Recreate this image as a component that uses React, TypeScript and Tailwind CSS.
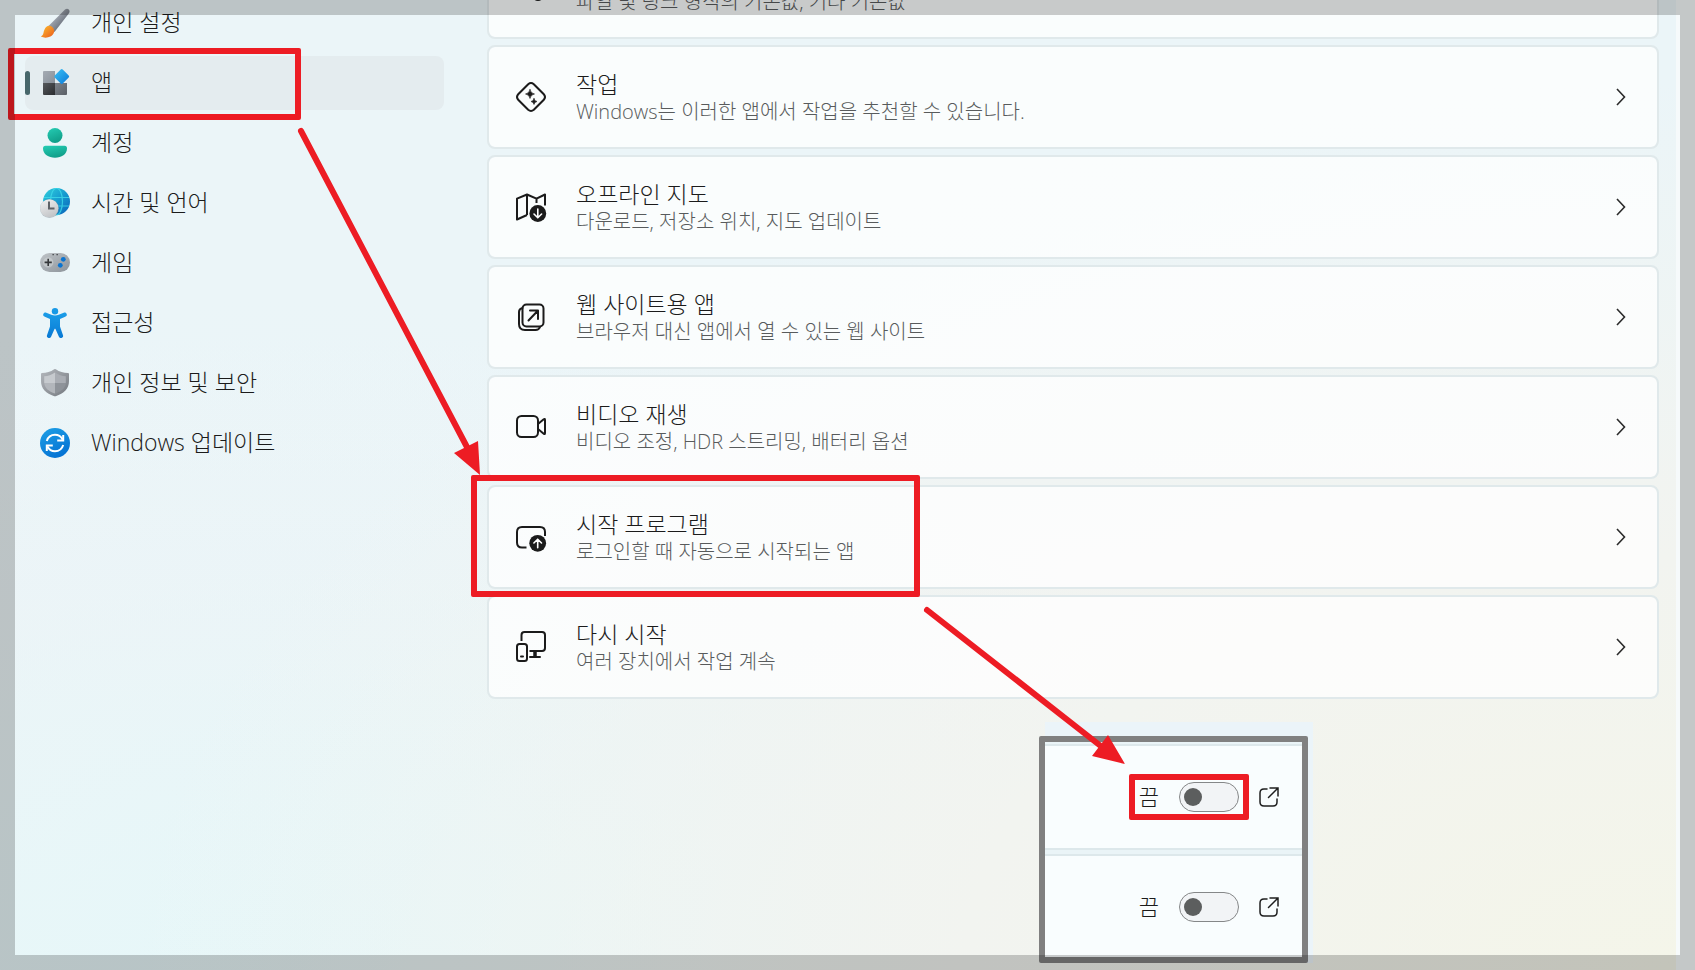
import type { ReactNode } from 'react';

interface NavEntry {
  label: string;
  icon: ReactNode;
  active?: boolean;
}

interface SettingEntry {
  title: string;
  description: string;
  icon: ReactNode;
}

function ColorIcon({ children }: { children: ReactNode }) {
  return (
    <svg viewBox="0 0 30 30" className="size-[30px] shrink-0" aria-hidden="true">
      {children}
    </svg>
  );
}

function LineIcon({ children }: { children: ReactNode }) {
  return (
    <svg
      viewBox="0 0 30 30"
      className="size-[30px] shrink-0 overflow-visible text-[#1b1b1b]"
      fill="none"
      stroke="currentColor"
      strokeWidth="2"
      strokeLinecap="round"
      strokeLinejoin="round"
      aria-hidden="true"
    >
      {children}
    </svg>
  );
}

/* Sidebar icons */

const BrushIcon = (
  <ColorIcon>
    <defs>
      <linearGradient id="brush-handle" x1="0" y1="0" x2="1" y2="1">
        <stop offset="0.2" stopColor="#b4bac3" />
        <stop offset="0.8" stopColor="#5c636e" />
      </linearGradient>
      <linearGradient id="brush-tip" x1="0" y1="0" x2="1" y2="1">
        <stop offset="0" stopColor="#fdc02f" />
        <stop offset="1" stopColor="#ea5a1c" />
      </linearGradient>
    </defs>
    <path d="M8.500 18 25 1.500c2-1.700 5.300-.4 4.400 2.700-.2.600-.5 1-.8 1.500L14.500 24z" fill="url(#brush-handle)" />
    <path d="M.8 28.500c1.800-.8 2.300-1.900 2.700-3.700.7-3.600 2.300-6.700 5.300-7.100 2.700 0 5 2 5.400 4.500.2 2.700-1.200 4.900-3.800 6.300-3 1.600-6.800 1.500-9.600 0z" fill="url(#brush-tip)" />
  </ColorIcon>
);

const AppsIcon = (
  <ColorIcon>
    <defs>
      <linearGradient id="apps-a" x1="0" y1="0" x2="1" y2="1">
        <stop offset="0" stopColor="#a4abb3" />
        <stop offset="1" stopColor="#89919a" />
      </linearGradient>
      <linearGradient id="apps-b" x1="0" y1="0" x2="1" y2="1">
        <stop offset="0" stopColor="#55585b" />
        <stop offset="1" stopColor="#2b2d30" />
      </linearGradient>
      <linearGradient id="apps-c" x1="0" y1="0" x2="1" y2="1">
        <stop offset="0" stopColor="#7c828a" />
        <stop offset="1" stopColor="#5a5f66" />
      </linearGradient>
      <linearGradient id="apps-d" x1="0" y1="0" x2="1" y2="1">
        <stop offset="0" stopColor="#3cc3f5" />
        <stop offset="1" stopColor="#0a78d8" />
      </linearGradient>
    </defs>
    <path d="M4 3h11v12H3V4q0-1 1-1z" fill="url(#apps-a)" />
    <path d="M3 15h12v12H4q-1 0-1-1z" fill="url(#apps-b)" />
    <path d="M15 15h12v11q0 1-1 1H15z" fill="url(#apps-c)" />
    <path d="M20.7 1.400q1-1 2 0l6 6q1 1 0 2l-6 6q-1 1-2 0l-6-6q-1-1 0-2z" fill="url(#apps-d)" />
  </ColorIcon>
);

const AccountIcon = (
  <ColorIcon>
    <defs>
      <linearGradient id="account" x1="0" y1="0" x2="0.4" y2="1">
        <stop offset="0" stopColor="#25cdb4" />
        <stop offset="1" stopColor="#119f8a" />
      </linearGradient>
    </defs>
    <circle cx="15" cy="7.5" r="7.5" fill="url(#account)" />
    <path d="M5.5 17.800h19q2.500 0 2.500 2.500c0 6-5.500 9.500-12 9.500S3 26.300 3 20.300q0-2.500 2.500-2.500z" fill="url(#account)" />
  </ColorIcon>
);

const TimeIcon = (
  <ColorIcon>
    <defs>
      <linearGradient id="globe" x1="0" y1="0" x2="1" y2="1">
        <stop offset="0" stopColor="#32d0dc" />
        <stop offset="0.5" stopColor="#169cd0" />
        <stop offset="1" stopColor="#0a5fb8" />
      </linearGradient>
      <linearGradient id="clock" x1="0" y1="0" x2="0.5" y2="1">
        <stop offset="0" stopColor="#f3f3f3" />
        <stop offset="1" stopColor="#c3c5c8" />
      </linearGradient>
    </defs>
    <circle cx="16.5" cy="13.5" r="13.5" fill="url(#globe)" />
    <g fill="none" stroke="#3fdaea" strokeWidth="1.2" opacity="0.8">
      <ellipse cx="16.5" cy="13.5" rx="6" ry="13.3" />
      <path d="M4 9.500h25M3.500 18h25.500" />
    </g>
    <circle cx="9.5" cy="20.500" r="9.5" fill="#80909c" opacity="0.5" />
    <circle cx="9.3" cy="20.300" r="9.1" fill="url(#clock)" />
    <path d="M9 13.500v7h5.500" fill="none" stroke="#5d6166" strokeWidth="2" />
  </ColorIcon>
);

const GameIcon = (
  <ColorIcon>
    <defs>
      <linearGradient id="pad" x1="0" y1="0" x2="1" y2="1">
        <stop offset="0" stopColor="#bfc4c8" />
        <stop offset="1" stopColor="#8c939a" />
      </linearGradient>
    </defs>
    <rect x="0" y="5" width="30" height="19" rx="9.5" fill="url(#pad)" />
    <circle cx="8.2" cy="14.4" r="5.2" fill="#cfd3d6" opacity="0.6" />
    <path d="M8.200 10.800v7.200M4.600 14.400h7.200" stroke="#35383b" strokeWidth="1.6" />
    <path d="M12.500 6.600h1.300M16.500 6.600h1.300" stroke="#3b3e41" strokeWidth="1.4" />
    <circle cx="23.3" cy="11.300" r="2.4" fill="#0a74d0" />
    <circle cx="20.3" cy="17.300" r="2.4" fill="#0a74d0" />
  </ColorIcon>
);

const AccessibilityIcon = (
  <ColorIcon>
    <defs>
      <linearGradient id="person" x1="0" y1="0" x2="0" y2="1">
        <stop offset="0" stopColor="#1b9de8" />
        <stop offset="1" stopColor="#0879d4" />
      </linearGradient>
    </defs>
    <circle cx="15" cy="3.2" r="3.2" fill="#1899e6" />
    <path
      d="M3.300 6.100c.5-1.500 1.700-1.900 3-1.400l5 2.100c2.400.9 5 .9 7.400 0l5-2.100c1.300-.5 2.600-.1 3 1.400.4 1.300-.2 2.200-1.500 2.700L20 10.900v7.600l3 8.800c.4 1.300-.2 2.300-1.400 2.600-1.300.4-2.300-.1-2.800-1.300L15.500 21c-.2-.4-.8-.4-1 0l-3.300 7.600c-.5 1.200-1.500 1.700-2.800 1.300-1.200-.3-1.800-1.300-1.400-2.600l3-8.800v-7.600L4.800 8.800C3.500 8.300 2.900 7.400 3.300 6.100z"
      fill="url(#person)"
    />
  </ColorIcon>
);

const ShieldIcon = (
  <ColorIcon>
    <defs>
      <linearGradient id="shield" x1="0" y1="0" x2="1" y2="1">
        <stop offset="0" stopColor="#b4b8bd" />
        <stop offset="1" stopColor="#74797f" />
      </linearGradient>
    </defs>
    <path d="M14.200 1.300q.8-.5 1.600 0C19.500 4 23.500 5 28 5q1 0 1 1v7c0 7.500-5 12.500-13.300 15.200q-.7.200-1.400 0C6 25.500 1 20.500 1 13V6q0-1 1-1c4.500 0 8.500-1 12.200-3.700z" fill="url(#shield)" />
    <path d="M15 4.500C11.500 7 8 8 4.200 8.200V15H15z" fill="#c6cace" />
    <path d="M15 4.500C18.500 7 22 8 25.800 8.200V15H15z" fill="#a9adb3" />
    <path d="M4.200 15H15v10.500C8.500 23.500 4.700 20 4.200 15z" fill="#b2b6bb" />
    <path d="M25.800 15H15v10.500c6.500-2 10.300-5.500 10.800-10.500z" fill="#8e9399" />
  </ColorIcon>
);

const UpdateIcon = (
  <ColorIcon>
    <defs>
      <linearGradient id="update" x1="0" y1="0" x2="0.5" y2="1">
        <stop offset="0" stopColor="#1ea0e6" />
        <stop offset="1" stopColor="#0674d4" />
      </linearGradient>
    </defs>
    <circle cx="15" cy="15" r="15" fill="url(#update)" />
    <g fill="none" stroke="#fff" strokeWidth="2">
      <path d="M6.800 13c1.200-3.800 4.500-6.200 8.200-6.200 3.200 0 6 1.700 7.600 4.700" />
      <path d="M23.200 7v5.500h-6" />
      <path d="M23.200 17c-1.200 3.800-4.500 6.200-8.200 6.200-3.200 0-6-1.700-7.600-4.700" />
      <path d="M6.800 23v-5.500h6" />
    </g>
  </ColorIcon>
);

/* Settings card icons */

const DefaultAppsIcon = (
  <LineIcon>
    <path d="M6 1h18q5 0 5 5v5M1 11V6q0-5 5-5M1 11v6" />
    <circle cx="22" cy="23" r="5" fill="currentColor" />
  </LineIcon>
);

const ActionsIcon = (
  <LineIcon>
    <path d="M12.200 2.200q2.800-2.400 5.600 0l10 10q2.400 2.800 0 5.600l-10 10q-2.800 2.400-5.600 0l-10-10q-2.400-2.800 0-5.600z" />
    <path d="M14 7.500q.6 3.900 4.500 4.500-3.900.6-4.500 4.500-.6-3.900-4.500-4.500 3.900-.6 4.500-4.500z" fill="currentColor" strokeWidth="0.6" />
    <path d="M18 16.500q.4 2.600 3 3-2.600.4-3 3-.4-2.600-3-3 2.600-.4 3-3z" fill="currentColor" strokeWidth="0.6" />
  </LineIcon>
);

const MapIcon = (
  <LineIcon>
    <path d="M11 23 1 27.500V6.700L11 2.500l9.500 4.200L29 2.500v11M11 3v20M20.500 7v4" strokeLinecap="butt" />
    <circle cx="21.8" cy="21.500" r="8.4" fill="currentColor" stroke="none" />
    <path d="M21.800 17v8.500M18 22l3.800 3.800 3.800-3.800" stroke="#fff" strokeWidth="1.6" />
  </LineIcon>
);

const WebAppsIcon = (
  <LineIcon>
    <rect x="6.5" y="2.5" width="21" height="22" rx="4" />
    <path d="M6.500 6C4 6.500 3 8 3 10v12q0 6 6 6h10.500q3.500 0 4.500-3" />
    <path d="M12.500 18.500 22 8.500M14 8.500h8V17" />
  </LineIcon>
);

const VideoIcon = (
  <LineIcon>
    <rect x="1" y="4" width="21" height="21" rx="4.500" />
    <path d="m22 12 5.700-4.700q1.300-1 1.300.7v13q0 1.700-1.300.7L22 17" />
  </LineIcon>
);

const StartupIcon = (
  <LineIcon>
    <path d="M10.500 25.500H6q-5 0-5-5V10q0-5 5-5h18q5 0 5 5v4" strokeLinecap="butt" />
    <circle cx="21.7" cy="21.300" r="8.4" fill="currentColor" stroke="none" />
    <path d="M21.700 25.800v-8.500M17.900 21l3.800-3.800 3.800 3.800" stroke="#fff" strokeWidth="1.6" />
  </LineIcon>
);

const ResumeIcon = (
  <LineIcon>
    <path d="M5.500 9V3q0-3 3-3H26q3 0 3 3v13q0 3-3 3H13.500" strokeLinecap="butt" />
    <rect x="1" y="12" width="10" height="17" rx="2.500" />
    <path d="M5 24.500h2M14 25h10" />
    <path d="M19 19.500V25" strokeWidth="3.500" strokeLinecap="butt" />
  </LineIcon>
);

function ChevronIcon() {
  return (
    <svg viewBox="0 0 10 18" className="h-[18px] w-2.5 shrink-0" fill="none" stroke="#2a2a2a" strokeWidth="1.6" aria-hidden="true">
      <path d="m1 1 7.500 8L1 17" />
    </svg>
  );
}

function OpenIcon() {
  return (
    <svg viewBox="0 0 20 20" className="size-5" fill="none" stroke="#1f1f1f" strokeWidth="1.5" strokeLinecap="round" aria-hidden="true">
      <path d="M8 2H5Q1 2 1 6v9q0 4 4 4h9q4 0 4-4v-3" />
      <path d="M11 1h8v8M19 1l-9.500 9.500" />
    </svg>
  );
}

const navEntries: NavEntry[] = [
  { label: '개인 설정', icon: BrushIcon },
  { label: '앱', icon: AppsIcon, active: true },
  { label: '계정', icon: AccountIcon },
  { label: '시간 및 언어', icon: TimeIcon },
  { label: '게임', icon: GameIcon },
  { label: '접근성', icon: AccessibilityIcon },
  { label: '개인 정보 및 보안', icon: ShieldIcon },
  { label: 'Windows 업데이트', icon: UpdateIcon },
];

const settingEntries: SettingEntry[] = [
  { title: '기본 앱', description: '파일 및 링크 형식의 기본값, 기타 기본값', icon: DefaultAppsIcon },
  { title: '작업', description: 'Windows는 이러한 앱에서 작업을 추천할 수 있습니다.', icon: ActionsIcon },
  { title: '오프라인 지도', description: '다운로드, 저장소 위치, 지도 업데이트', icon: MapIcon },
  { title: '웹 사이트용 앱', description: '브라우저 대신 앱에서 열 수 있는 웹 사이트', icon: WebAppsIcon },
  { title: '비디오 재생', description: '비디오 조정, HDR 스트리밍, 배터리 옵션', icon: VideoIcon },
  { title: '시작 프로그램', description: '로그인할 때 자동으로 시작되는 앱', icon: StartupIcon },
  { title: '다시 시작', description: '여러 장치에서 작업 계속', icon: ResumeIcon },
];

function NavItem({ label, icon, active }: NavEntry) {
  return (
    <a
      href="#"
      aria-current={active ? 'page' : undefined}
      className={
        active
          ? 'relative flex h-[54px] items-center gap-[21px] rounded-lg bg-[#e4ecef] pl-[15px]'
          : 'relative flex h-[54px] items-center gap-[21px] rounded-lg pl-[15px]'
      }
    >
      {active && <span className="absolute left-0 h-6 w-[5px] rounded-full bg-[#47676b]" />}
      {icon}
      <span className="pb-0.5 text-[23px] leading-7">{label}</span>
    </a>
  );
}

function SettingCard({ title, description, icon }: SettingEntry) {
  return (
    <a
      href="#"
      className="flex h-[104px] items-center gap-[30px] rounded-lg border-2 border-[#e0e9eb] bg-white/75 bg-clip-padding pr-[31px] pl-[27px]"
    >
      {icon}
      <span className="flex flex-1 flex-col gap-0.5">
        <span className="text-[23px] leading-7">{title}</span>
        <span className="text-[20px] leading-6 text-[#585b5c]">{description}</span>
      </span>
      <ChevronIcon />
    </a>
  );
}

function ToggleRow({ id, className }: { id: string; className: string }) {
  return (
    <div className={`flex items-center justify-end gap-5 border-[#dde8eb] bg-[#f9fdfe] pr-[23px] ${className}`}>
      <label htmlFor={id} className="pb-0.5 text-[22px] leading-7">
        끔
      </label>
      <input
        id={id}
        type="checkbox"
        role="switch"
        className="flex h-[30px] w-[60px] appearance-none items-center rounded-full border border-[#858788] bg-[#f2f4f6] pl-1 before:size-[18px] before:rounded-full before:bg-[#5c5e5e] before:content-['']"
      />
      <button type="button" aria-label="열기">
        <OpenIcon />
      </button>
    </div>
  );
}

export default function App() {
  return (
    <div className="relative h-screen overflow-hidden bg-[#f6fafb] pr-[19px] font-['Open_Sans','Noto_Sans_CJK_KR',sans-serif] font-light text-[#1b1b1b]">
      <div className="flex h-full items-start gap-[43px] overflow-hidden bg-[radial-gradient(ellipse_at_100%_100%,#f4f5e9_0%,#f2f4f0_30%,transparent_65%),radial-gradient(ellipse_at_18%_105%,#e6f7f9_0%,transparent_50%),linear-gradient(to_bottom,#ebf5f8_0%,#ebf5f8_35%,#eff3f6_65%,#ebf5f6_100%)] pr-[17px] pl-[25px]">
        <nav className="-mt-1 flex w-[419px] shrink-0 flex-col gap-1.5">
          {navEntries.map((entry) => (
            <NavItem key={entry.label} {...entry} />
          ))}
        </nav>
        <main className="-mt-[65px] flex flex-1 flex-col gap-1.5">
          {settingEntries.map((entry) => (
            <SettingCard key={entry.title} {...entry} />
          ))}
        </main>
      </div>

      {/* Startup toggles callout */}
      <div className="absolute top-[722px] left-[1045px] h-[241px] w-[268px] bg-[#ebf4f9]" />
      <section className="absolute top-[736px] left-[1039px] w-[269px] rounded-xs border-6 border-[#808080] bg-[#eaf4f7] pt-0.5">
        <ToggleRow id="startup-first" className="h-[106px] border-y-2" />
        <ToggleRow id="startup-second" className="mt-1 h-[103px] border-t-2" />
      </section>

      {/* Highlights */}
      <div className="absolute top-12 left-2 h-[72px] w-[293px] rounded-xs border-6 border-[#ed1c24]" />
      <div className="absolute top-[475px] left-[471px] h-[122px] w-[449px] rounded-xs border-6 border-[#ed1c24]" />
      <div className="absolute top-[774px] left-[1129px] h-[46px] w-[120px] rounded-xs border-6 border-[#ed1c24]" />
      <svg viewBox="0 0 1695 970" className="pointer-events-none absolute top-0 left-0 h-[970px] w-[1695px] max-w-none" aria-hidden="true">
        <g stroke="#ed1c24" strokeWidth="6" strokeLinecap="round">
          <path d="M301 131 468 449" />
          <path d="M927 610 1102 747" />
        </g>
        <path d="m480 475-26-22 24-12zM1125 764l-33-8 16-21z" fill="#ed1c24" />
      </svg>

      <div className="pointer-events-none absolute inset-0 border-[15px] border-black/20" />
    </div>
  );
}
